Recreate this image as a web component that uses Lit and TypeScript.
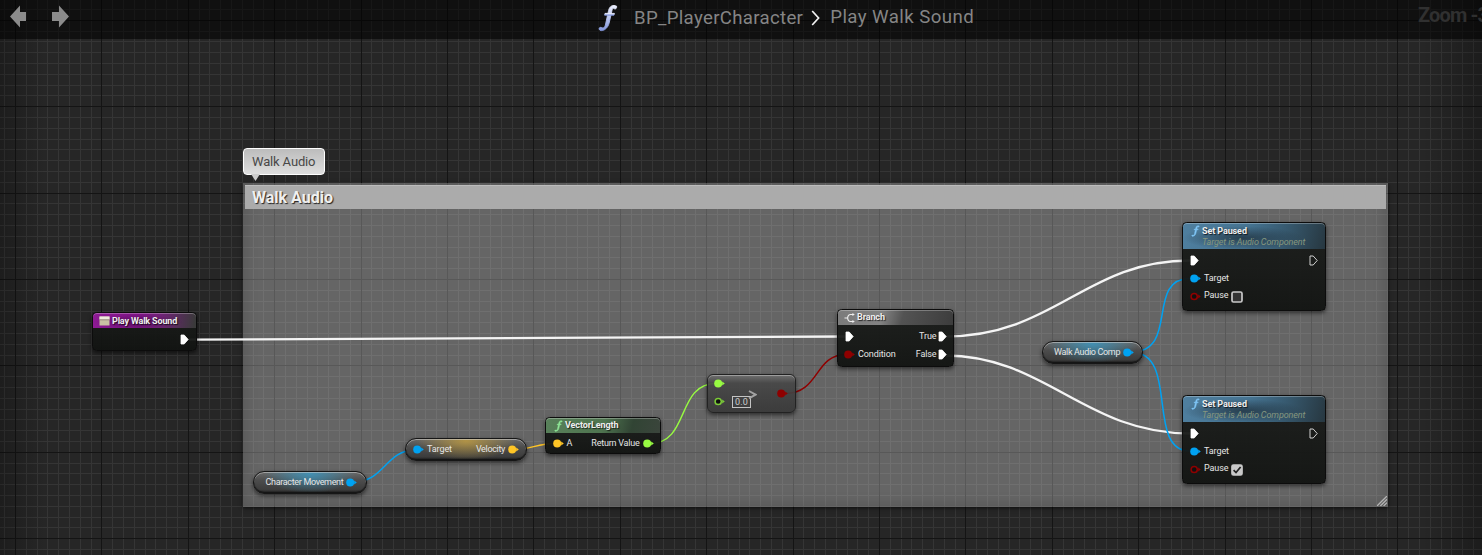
import { LitElement, html, svg, css, nothing } from "lit";
import { customElement } from "lit/decorators.js";
import { styleMap } from "lit/directives/style-map.js";
import { classMap } from "lit/directives/class-map.js";

const W = 1482;
const H = 555;
const STEP = 10.8;

const BLUE = "#00a2f2";
const GOLD = "#ffc526";
const GREEN = "#98fb42";
const RED = "#8f0000";

const gridLines = () => {
  const out = [];
  const major = [];
  for (let k = -1; 15.4 + k * STEP < W; k++) {
    const x = Math.floor(15.4 + k * STEP) + 0.5;
    (k % 8 === 0 ? major : out).push(`M${x} 0V${H}`);
  }
  for (let k = -1; 20.2 + k * STEP < H; k++) {
    const y = Math.floor(20.2 + k * STEP) + 0.5;
    (k % 8 === 0 ? major : out).push(`M0 ${y}H${W}`);
  }
  return { minor: out.join(""), major: major.join("") };
};

const fIcon = (cls: string, color: string) => html`
  <svg class=${cls} viewBox="0 0 20 28">
    <defs>
      <linearGradient id="fg" x1="0" y1="0" x2="0" y2="1">
        <stop offset="0" stop-color="#eef1ff" />
        <stop offset="1" stop-color="#8296dc" />
      </linearGradient>
    </defs>
    <g fill=${color} stroke=${color} stroke-width="0.9" transform="translate(1 1)">
      <path d="M17.6 1.2 C14 -0.6 10.6 1 9.6 5.4 L6.6 19 C6 22 5 23.6 2.6 22.6 C1.4 22 0 22.6 0 24 C0.6 26 3.4 26 5.4 24.8 C8.4 23 9.6 20.4 10.4 17 L13 5.4 C13.4 3.4 14 2.6 15.4 3.8 C16.8 4.4 18 3 17.6 1.2Z" />
      <path d="M6 8.4H15.4L15 10.2H5.6Z" />
    </g>
  </svg>`;

const pin = (color: string, hollow = false) => html`
  <svg class="pin" width="12" height="9" viewBox="0 0 12 9">
    <circle cx="4.2" cy="4.5" r=${hollow ? 3.1 : 4} fill=${hollow ? "#101010" : color}
      stroke=${hollow ? color : "none"} stroke-width="1.5" />
    <path d="M8.2 2.6L10.8 4.5L8.2 6.4Z" fill=${color} />
  </svg>`;

const exec = (hollow = false) => html`
  <svg class="exec" width="9" height="11" viewBox="0 0 9 11">
    <path d="M1 1H4.2L8.2 5.5L4.2 10H1Z" fill=${hollow ? "none" : "#fff"}
      stroke=${hollow ? "#d0d0d0" : "#fff"} stroke-width=${hollow ? 1 : 0.8} stroke-linejoin="round" />
  </svg>`;

const at = (x: number, y: number, w: number, h: number) =>
  styleMap({ left: `${x}px`, top: `${y}px`, width: `${w}px`, height: `${h}px` });

const wires: [string, string, number][] = [
  ["M189 339.7C420 339.7 620 336.5 846 336.5", "#f4f4f4", 2.3],
  ["M945 336.5C1055 336.5 1085 260.5 1190 260.5", "#f4f4f4", 2.3],
  ["M945 355.5C1045 355.5 1085 433.5 1190 433.5", "#f4f4f4", 2.3],
  ["M1131 352C1180 352 1145 278.5 1190 278.5", BLUE, 1.5],
  ["M1131 352C1180 352 1145 451 1190 451", BLUE, 1.5],
  ["M354 482C384 482 386 450 415 450", BLUE, 1.5],
  ["M515 449.5C530 449.5 538 443.5 555 443.5", GOLD, 1.5],
  ["M650 443.5C690 443.5 676 383.5 716 383.5", GREEN, 1.5],
  ["M785 393.5C820 393.5 814 354.5 846 354.5", RED, 1.5],
];

@customElement("app-root")
export class AppRoot extends LitElement {
  static styles = css`
    :host {
      display: block;
      position: relative;
      width: 1482px;
      height: 555px;
      overflow: hidden;
      background: #262626;
      font-family: Roboto, "Liberation Sans", sans-serif;
      color: #e6e6e6;
    }
    * { box-sizing: border-box; }
    svg { display: block; flex: none; }
    .layer { position: absolute; inset: 0; }
    .vignette {
      position: absolute;
      inset: 0;
      background: linear-gradient(90deg, rgba(0, 0, 0, 0.24), transparent 45px, transparent calc(100% - 60px), rgba(0, 0, 0, 0.26));
    }
    .bar {
      position: absolute;
      inset: 0 0 auto 0;
      height: 39px;
      background: rgba(0, 0, 0, 0.56);
      display: flex;
      align-items: flex-start;
    }
    .bar > * { flex: none; }
    .nav { display: flex; gap: 24px; padding: 4px 0 0 9px; width: 598px; }
    .crumbs { display: flex; align-items: flex-start; color: #858585; font-size: 18.67px; letter-spacing: 0.3px; line-height: 24px; white-space: nowrap; width: 390px; }
    .big-f { width: 20px; height: 28px; margin-top: 4px; }
    .crumb { margin: 6px 0 0 16px; width: 170px; }
    .crumb.last { margin: 5px 0 0 10px; width: 160px; letter-spacing: 0.42px; }
    .sep { margin: 10px 0 0 8px; }
    .zoom { margin: 3px 0 0 430px; font: bold 20px/24px Roboto, sans-serif; color: #303030; white-space: nowrap; letter-spacing: -0.85px; }

    .comment {
      position: absolute;
      background: rgba(255, 255, 255, 0.29);
      padding: 2px 1.5px 0 2px;
      box-shadow: 0 1px 4px rgba(0, 0, 0, 0.7), inset 0 0 16px rgba(0, 0, 0, 0.18);
    }
    .comment-title {
      height: 24px;
      background: #ababab;
      border-top: 1px solid #bcbcbc;
      padding-left: 7px;
      font-weight: bold;
      font-size: 16px;
      line-height: 24px;
      color: #f0f0f0;
      text-shadow: 1px 1px 1px #222;
    }
    .grip { position: absolute; right: 1px; bottom: 1px; }
    .bubble {
      position: absolute;
      border: 1px solid #fff;
      border-radius: 4px;
      background: linear-gradient(#bcbcbc, #dedede);
      color: #484848;
      font-size: 13px;
      letter-spacing: -0.15px;
      line-height: 25px;
      padding-left: 8px;
      white-space: nowrap;
    }
    .tail { position: absolute; left: 7px; top: 25px; }

    .node {
      position: absolute;
      border-radius: 4.5px;
      border: 1px solid #0c0c0c;
      background: linear-gradient(rgba(26, 28, 26, 0.94), rgba(17, 19, 17, 0.95));
      box-shadow: 0 2px 4px rgba(0, 0, 0, 0.55);
      font-size: 9px;
      letter-spacing: -0.1px;
      line-height: 11px;
      white-space: nowrap;
      display: flex;
      flex-direction: column;
    }
    .head {
      display: flex;
      border-radius: 4px 4px 0 0;
      box-shadow: inset 0 1px 0 rgba(255, 255, 255, 0.28);
      font-weight: bold;
      letter-spacing: -0.1px;
      color: #eee;
      text-shadow: 1px 1px 1px rgba(0, 0, 0, 0.7);
    }
    .purple {
      height: 15px;
      letter-spacing: -0.16px;
      background: radial-gradient(ellipse 45px 7px at 45px 9px, rgba(60, 8, 66, 0.6), transparent),
        linear-gradient(100deg, #8d1a94 0%, #7d1384 45%, #6f2276 65%, #3a3a3a 98%);
    }
    .gray { background: linear-gradient(105deg, #7b7b7b 0%, #838383 38%, #535353 56%, #3c3c3c 100%); height: 15px; }
    .green { background: linear-gradient(105deg, #58805a 0%, #4f7550 50%, #314434 75%, #3b453c 100%); height: 15px; }
    .blue {
      height: 26px;
      background: radial-gradient(ellipse 60px 12px at 60px 15px, rgba(30, 45, 56, 0.75), transparent),
        linear-gradient(105deg, #4f7f9f 0%, #457391 45%, #375a70 70%, #273740 100%);
    }
    .head .label { padding-top: 3px; }
    .gray .label, .green .label { padding-top: 2px; }
    .sub { font-weight: normal; font-style: italic; color: #85977f; text-shadow: none; }
    .small-f { width: 9px; height: 12px; margin: 2px 2px 0 8px; }
    .icon { margin: 3px 2px 0 6px; }
    .row { display: flex; align-items: center; height: 18px; padding: 0 7px; }
    .row .push { margin-left: auto; }
    .pin + span { margin-left: 2px; }
    .paused .pin { margin-left: -0.5px; }
    .paused .pin + span { margin-left: 2.5px; }
    .gap { margin-right: 3px; }
    .body { display: flex; flex-direction: column; padding-top: 2px; }
    .pause-label { padding-bottom: 1px; }
    .branch .gap { margin-right: 1px; }
    .branch .row { padding-right: 6.5px; }
    .branch .row + .row .pin { margin-left: -1px; }
    .branch .row + .row .exec { margin-top: 1px; }
    .branch .row + .row .gap { padding-top: 1px; }
    .vector .row { height: 19px; padding: 1px 5.5px 0 6.5px; }
    .vector .gap { letter-spacing: -0.22px; }
    .pill {
      border-radius: 11px;
      border-color: #161616;
      box-shadow: inset 0 1px 0 rgba(220, 220, 220, 0.5), inset 0 -1px 1px #151515, 0 2px 4px rgba(0, 0, 0, 0.55);
      flex-direction: row;
      align-items: center;
    }
    .pill .gap { letter-spacing: -0.33px; }
    .b .gap { margin-left: 4.5px; margin-right: 2.5px; }
    .pill.y { justify-content: space-between; }
    .y .row:last-child { padding-right: 6px; }
    .pill.b { background: radial-gradient(ellipse 46px 19px at 50% 2px, rgba(60, 150, 190, 0.85), transparent), linear-gradient(#6a6a6a, #4c4c4c 40%, #3c3c3c 85%, #1c1c1c); }
    .pill.y { background: radial-gradient(ellipse 50px 19px at 50% 2px, rgba(190, 155, 65, 0.85), transparent), linear-gradient(#6a6a6a, #4c4c4c 40%, #3c3c3c 85%, #1c1c1c); }
    .compare {
      border-radius: 6px;
      border-color: #222;
      background: linear-gradient(rgba(112, 112, 112, 0.9), rgba(70, 70, 70, 0.9) 22%, rgba(56, 56, 56, 0.92));
      box-shadow: inset 0 1px 0 rgba(230, 230, 230, 0.4), 0 2px 4px rgba(0, 0, 0, 0.55);
      flex-direction: row;
      align-items: center;
      padding-left: 6px;
    }
    .ins { display: flex; flex-direction: column; width: 63px; padding-bottom: 2px; }
    .ins .row { padding: 0; }
    .value { border: 1px solid #c4c4c4; height: 12px; width: 19px; line-height: 10px; text-align: center; color: #ccc; letter-spacing: 0.1px; margin-left: 6px; }
    .gt { position: absolute; left: 40px; top: 12px; }
    .box { margin: 2px 0 0 3px; }
  `;

  private setPaused(y: number, checked: boolean) {
    return html`<div class="node paused" style=${at(1182, y, 144, 88.5)}>
      <div class="head blue">
        ${fIcon("small-f", "#7fc4f5")}
        <div class="label">Set Paused<div class="sub">Target is Audio Component</div></div>
      </div>
      <div class="body">
        <div class="row">${exec()}<span class="push"></span>${exec(true)}</div>
        <div class="row">${pin(BLUE)}<span>Target</span></div>
        <div class="row">${pin(RED, true)}<span class="pause-label">Pause</span>
          <svg class="box" width="12" height="12" viewBox="0 0 12 12">
            <rect x="1" y="1" width="10" height="10" rx="1.5" fill=${checked ? "#c9c9c9" : "#333"} stroke="#c9c9c9" stroke-width="1.7" />
            ${checked ? svg`<path d="M2.6 6.2L5 8.6L9.6 3" fill="none" stroke="#222" stroke-width="1.7" />` : nothing}
          </svg>
        </div>
      </div>
    </div>`;
  }

  private pill(text: string, x: number, y: number, w: number) {
    return html`<div class=${classMap({ node: true, pill: true, b: true })} style=${at(x, y, w, 23)}>
      <div class="row"><span class="gap">${text}</span>${pin(BLUE)}</div>
    </div>`;
  }

  render() {
    const g = gridLines();
    return html`
      <svg class="layer" width=${W} height=${H}>
        <path d=${g.minor} stroke="#353535" />
        <path d=${g.major} stroke="#141414" />
      </svg>
      <div class="vignette"></div>

      <div class="comment" style=${at(243, 183, 1144.5, 323.5)}>
        <div class="comment-title">Walk Audio</div>
        <svg class="grip" width="10" height="10" viewBox="0 0 10 10">
          <path d="M0 10L10 0M3.3 10L10 3.3M6.6 10L10 6.6" stroke="#b4b4b4" stroke-width="1.3" />
        </svg>
      </div>
      <div class="bubble" style=${at(243, 148, 82, 27)}>
        Walk Audio
        <svg class="tail" width="9" height="7"><path d="M0 0H9L4.5 7Z" fill="#ccc" /></svg>
      </div>

      <svg class="layer" width=${W} height=${H} fill="none">
        ${wires.map(([d, c, w]) => svg`<path d=${d} stroke=${c} stroke-width=${w} />`)}
      </svg>

      <div class="node" style=${at(92, 312, 105.4, 39)}>
        <div class="head purple">
          <svg class="icon" width="11" height="10" viewBox="0 0 11 10">
            <rect x="0.5" y="0.5" width="10" height="9" fill="#c9c2a4" />
            <rect x="0.5" y="0.5" width="10" height="3" fill="#eee9dc" />
            <path d="M0.5 3.8H10.5" stroke="#7c6a68" stroke-width="0.7" />
          </svg>
          <div class="label">Play Walk Sound</div>
        </div>
        <div class="body"><div class="row"><span class="push"></span>${exec()}</div></div>
      </div>

      ${this.pill("Character Movement", 253, 471, 114)}
      <div class="node pill y" style=${at(405, 438, 122, 23)}>
        <div class="row">${pin(BLUE)}<span>Target</span></div>
        <div class="row"><span class="gap">Velocity</span>${pin(GOLD)}</div>
      </div>
      <div class="node vector" style=${at(545, 417, 116, 37)}>
        <div class="head green">${fIcon("small-f", "#8fe596")}<div class="label">VectorLength</div></div>
        <div class="row">${pin(GOLD)}<span>A</span><span class="push gap">Return Value</span>${pin(GREEN)}</div>
      </div>
      <div class="node compare" style=${at(707, 374, 89, 39)}>
        <div class="ins">
          <div class="row">${pin(GREEN)}</div>
          <div class="row">${pin("#7ccb38", true)}<div class="value">0.0</div></div>
        </div>
        <svg class="gt" width="9" height="14" viewBox="0 0 9 14">
          <path d="M1 4L7.6 7.6L1 11.4" fill="none" stroke="#a2a2a2" stroke-width="1.9" />
        </svg>
        ${pin(RED)}
      </div>
      <div class="node branch" style=${at(837, 309, 117, 58)}>
        <div class="head gray">
          <svg class="icon" width="11" height="10" viewBox="0 0 11 10" fill="none" stroke="#eee" stroke-width="1.2">
            <path d="M0.5 5H3.5M9 1.5H6.5Q4 1.5 3.6 5Q4 8.5 6.5 8.5H9" />
            <path d="M8.4 0L10.8 1.5L8.4 3ZM8.4 7L10.8 8.5L8.4 10Z" fill="#eee" stroke="none" />
          </svg>
          <div class="label">Branch</div>
        </div>
        <div class="body">
          <div class="row">${exec()}<span class="push gap">True</span>${exec()}</div>
          <div class="row">${pin(RED)}<span>Condition</span><span class="push gap">False</span>${exec()}</div>
        </div>
      </div>
      ${this.pill("Walk Audio Comp", 1041.5, 341, 101)}
      ${this.setPaused(222, false)} ${this.setPaused(395, true)}

      <div class="bar">
        <div class="nav">
          <svg width="18" height="25" viewBox="0 0 18 25"><path d="M1 12.5L11 1.5V8H17V17H11V23.5Z" fill="#8b8b8b" /></svg>
          <svg width="19" height="25" viewBox="0 0 19 25"><path d="M18 12.5L8 1.5V8H1V17H8V23.5Z" fill="#8b8b8b" /></svg>
        </div>
        <div class="crumbs">
          ${fIcon("big-f", "url(#fg)")}
          <span class="crumb">BP_PlayerCharacter</span>
          <svg class="sep" width="9" height="16" viewBox="0 0 9 16"><path d="M1.2 1L7.6 8L1.2 15" fill="none" stroke="#f2f2f2" stroke-width="1.7" /></svg>
          <span class="crumb last">Play Walk Sound</span>
        </div>
        <div class="zoom">Zoom -3</div>
      </div>
    `;
  }
}
